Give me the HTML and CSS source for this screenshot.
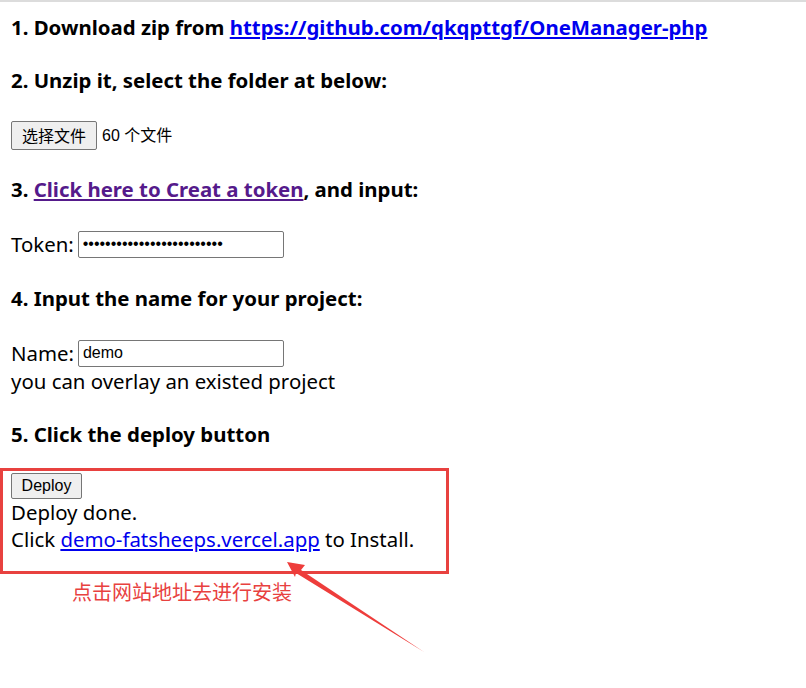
FILE: index.html
```html
<!DOCTYPE html>
<html lang="en">
<head>
<meta charset="utf-8">
<title>Deploy OneManager</title>
<link rel="stylesheet" href="styles.css">
</head>
<body>
<div class="topline"></div>
<main class="page">
  <h3 class="step">1. Download zip from <a class="link" href="#">https://github.com/qkqpttgf/OneManager-php</a></h3>
  <h3 class="step">2. Unzip it, select the folder at below:</h3>
  <div class="row"><button class="btn btn-file">选择文件</button><span class="files">60 个文件</span></div>
  <h3 class="step">3. <a class="link visited" href="#">Click here to Creat a token</a>, and input:</h3>
  <div class="row"><span class="label">Token:</span><input class="field" type="password" value="abcdefghijklmnopqrstuvwxy"></div>
  <h3 class="step">4. Input the name for your project:</h3>
  <div class="row"><span class="label">Name:</span><input class="field" type="text" value="demo"></div>
  <div class="line">you can overlay an existed project</div>
  <h3 class="step step-last">5. Click the deploy button</h3>
  <section class="highlight">
    <div class="deploy-row"><button class="btn btn-deploy">Deploy</button></div>
    <div class="line">Deploy done.</div>
    <div class="line">Click <a class="link" href="#">demo-fatsheeps.vercel.app</a> to Install.</div>
  </section>
  <p class="note">点击网站地址去进行安装</p>
</main>
<svg class="arrow" width="806" height="688" viewBox="0 0 806 688">
  <polygon points="287,562 305,565 301,570 424,652 296,573 295,577" fill="#ee3d3b"/>
</svg>
</body>
</html>
```
FILE: styles.css
```css
html, body {
  margin: 0;
  padding: 0;
  background: #fff;
}
body {
  font-family: "Noto Sans", "Open Sans", sans-serif;
  font-size: 20.4px;
  line-height: 27px;
  color: #000;
  position: relative;
  width: 806px;
  height: 688px;
  overflow: hidden;
}
.topline {
  height: 2px;
  background: #dcdcdc;
}
.page {
  padding: 12px 0 0 0;
}
.step {
  font-size: 20.4px;
  font-weight: 700;
  line-height: 27px;
  margin: 26px 0 26px 11px;
}
.step:first-child {
  margin-top: 0;
}
.step-last {
  margin-bottom: 20px;
}
.link {
  color: #0000ee;
  text-decoration: underline;
}
.link.visited {
  color: #551a8b;
}
.row {
  display: flex;
  align-items: center;
  margin: 0 0 0 11px;
  height: 30px;
}
.label {
  margin-right: 4px;
}
.files {
  font-family: "Liberation Sans", "Noto Sans CJK SC", sans-serif;
  font-size: 16px;
  margin-left: 5px;
}
.btn {
  font-family: "Liberation Sans", "Noto Sans CJK SC", sans-serif;
  font-size: 16px;
  background: #efefef;
  border: 1px solid #767676;
  border-radius: 2px;
  color: #000;
  padding: 0 8px;
  margin: 0;
  box-sizing: border-box;
}
.btn-file {
  width: 86px;
  height: 29px;
}
.btn-deploy {
  width: 71px;
  height: 26px;
}
.field {
  width: 206px;
  height: 27px;
  box-sizing: border-box;
  border: 1px solid #767676;
  border-radius: 2px;
  padding: 1px 4px;
  margin: 0;
  font-family: "Liberation Sans", sans-serif;
  font-size: 16px;
  color: #000;
}
.line {
  margin-left: 11px;
}
.highlight {
  margin: 20px 0 0 0;
  width: 449px;
  height: 106px;
  box-sizing: border-box;
  border: 3px solid #e8413f;
  padding: 2px 0 0 8px;
}
.highlight .line {
  margin-left: 0;
}
.deploy-row {
  height: 26px;
  display: flex;
}
.note {
  margin: 4px 0 0 72px;
  font-family: "Noto Sans CJK SC", sans-serif;
  font-size: 20px;
  line-height: 27px;
  color: #e8413f;
}
.arrow {
  position: absolute;
  left: 0;
  top: 0;
  pointer-events: none;
}
```
